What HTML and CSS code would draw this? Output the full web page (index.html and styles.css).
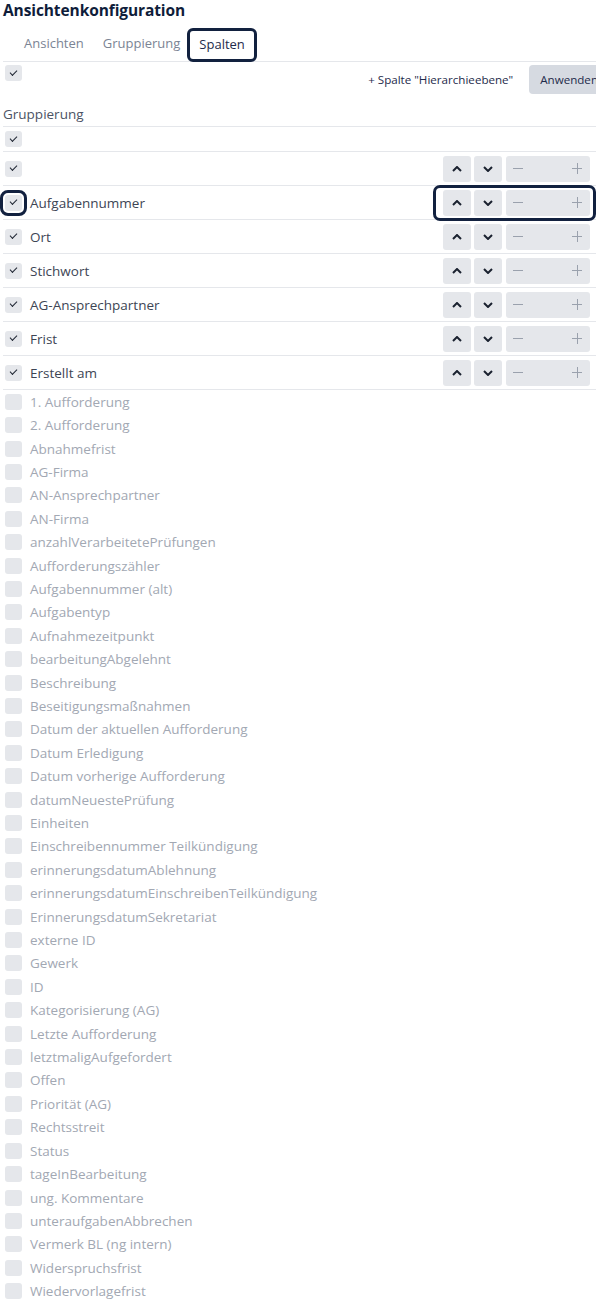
FILE: index.html
```html
<!DOCTYPE html>
<html lang="de">
<head>
    <meta charset="UTF-8">
    <meta name="viewport" content="width=device-width, initial-scale=1.0">
    <title>Ansichtenkonfiguration</title>
    <link rel="stylesheet" href="styles.css">
</head>
<body>
    <div class="panel">
        <h1 class="title">Ansichtenkonfiguration</h1>
        <nav class="tabs">
            <span class="tab">Ansichten</span>
            <span class="tab">Gruppierung</span>
            <span class="tab active">Spalten</span>
        </nav>

        <div class="toolbar">
            <span class="check on"></span>
            <div class="actions">
                <button class="link-btn">+ Spalte "Hierarchieebene"</button>
                <button class="apply-btn">Anwenden</button>
            </div>
        </div>

        <div class="section-label">Gruppierung</div>
        <div class="row row-group"><span class="check on"></span></div>

        <div class="row">
            <span class="check on"></span>
            <span class="label"></span>
            <div class="controls">
                <button class="mv"><svg width="10" height="6" viewBox="0 0 10 6"><path d="M1 5 5 1 9 5"/></svg></button>
                <button class="mv"><svg width="10" height="6" viewBox="0 0 10 6"><path d="M1 1 5 5 9 1"/></svg></button>
                <div class="stepper"><span class="minus"></span><span class="plus"></span></div>
            </div>
        </div>
        <div class="row">
            <span class="check on focus"></span>
            <span class="label">Aufgabennummer</span>
            <div class="controls focus">
                <button class="mv"><svg width="10" height="6" viewBox="0 0 10 6"><path d="M1 5 5 1 9 5"/></svg></button>
                <button class="mv"><svg width="10" height="6" viewBox="0 0 10 6"><path d="M1 1 5 5 9 1"/></svg></button>
                <div class="stepper"><span class="minus"></span><span class="plus"></span></div>
            </div>
        </div>
        <div class="row">
            <span class="check on"></span>
            <span class="label">Ort</span>
            <div class="controls">
                <button class="mv"><svg width="10" height="6" viewBox="0 0 10 6"><path d="M1 5 5 1 9 5"/></svg></button>
                <button class="mv"><svg width="10" height="6" viewBox="0 0 10 6"><path d="M1 1 5 5 9 1"/></svg></button>
                <div class="stepper"><span class="minus"></span><span class="plus"></span></div>
            </div>
        </div>
        <div class="row">
            <span class="check on"></span>
            <span class="label">Stichwort</span>
            <div class="controls">
                <button class="mv"><svg width="10" height="6" viewBox="0 0 10 6"><path d="M1 5 5 1 9 5"/></svg></button>
                <button class="mv"><svg width="10" height="6" viewBox="0 0 10 6"><path d="M1 1 5 5 9 1"/></svg></button>
                <div class="stepper"><span class="minus"></span><span class="plus"></span></div>
            </div>
        </div>
        <div class="row">
            <span class="check on"></span>
            <span class="label">AG-Ansprechpartner</span>
            <div class="controls">
                <button class="mv"><svg width="10" height="6" viewBox="0 0 10 6"><path d="M1 5 5 1 9 5"/></svg></button>
                <button class="mv"><svg width="10" height="6" viewBox="0 0 10 6"><path d="M1 1 5 5 9 1"/></svg></button>
                <div class="stepper"><span class="minus"></span><span class="plus"></span></div>
            </div>
        </div>
        <div class="row">
            <span class="check on"></span>
            <span class="label">Frist</span>
            <div class="controls">
                <button class="mv"><svg width="10" height="6" viewBox="0 0 10 6"><path d="M1 5 5 1 9 5"/></svg></button>
                <button class="mv"><svg width="10" height="6" viewBox="0 0 10 6"><path d="M1 1 5 5 9 1"/></svg></button>
                <div class="stepper"><span class="minus"></span><span class="plus"></span></div>
            </div>
        </div>
        <div class="row">
            <span class="check on"></span>
            <span class="label">Erstellt am</span>
            <div class="controls">
                <button class="mv"><svg width="10" height="6" viewBox="0 0 10 6"><path d="M1 5 5 1 9 5"/></svg></button>
                <button class="mv"><svg width="10" height="6" viewBox="0 0 10 6"><path d="M1 1 5 5 9 1"/></svg></button>
                <div class="stepper"><span class="minus"></span><span class="plus"></span></div>
            </div>
        </div>

        <ul class="unused">
            <li><span class="check"></span>1. Aufforderung</li>
            <li><span class="check"></span>2. Aufforderung</li>
            <li><span class="check"></span>Abnahmefrist</li>
            <li><span class="check"></span>AG-Firma</li>
            <li><span class="check"></span>AN-Ansprechpartner</li>
            <li><span class="check"></span>AN-Firma</li>
            <li><span class="check"></span>anzahlVerarbeitetePrüfungen</li>
            <li><span class="check"></span>Aufforderungszähler</li>
            <li><span class="check"></span>Aufgabennummer (alt)</li>
            <li><span class="check"></span>Aufgabentyp</li>
            <li><span class="check"></span>Aufnahmezeitpunkt</li>
            <li><span class="check"></span>bearbeitungAbgelehnt</li>
            <li><span class="check"></span>Beschreibung</li>
            <li><span class="check"></span>Beseitigungsmaßnahmen</li>
            <li><span class="check"></span>Datum der aktuellen Aufforderung</li>
            <li><span class="check"></span>Datum Erledigung</li>
            <li><span class="check"></span>Datum vorherige Aufforderung</li>
            <li><span class="check"></span>datumNeuestePrüfung</li>
            <li><span class="check"></span>Einheiten</li>
            <li><span class="check"></span>Einschreibennummer Teilkündigung</li>
            <li><span class="check"></span>erinnerungsdatumAblehnung</li>
            <li><span class="check"></span>erinnerungsdatumEinschreibenTeilkündigung</li>
            <li><span class="check"></span>ErinnerungsdatumSekretariat</li>
            <li><span class="check"></span>externe ID</li>
            <li><span class="check"></span>Gewerk</li>
            <li><span class="check"></span>ID</li>
            <li><span class="check"></span>Kategorisierung (AG)</li>
            <li><span class="check"></span>Letzte Aufforderung</li>
            <li><span class="check"></span>letztmaligAufgefordert</li>
            <li><span class="check"></span>Offen</li>
            <li><span class="check"></span>Priorität (AG)</li>
            <li><span class="check"></span>Rechtsstreit</li>
            <li><span class="check"></span>Status</li>
            <li><span class="check"></span>tageInBearbeitung</li>
            <li><span class="check"></span>ung. Kommentare</li>
            <li><span class="check"></span>unteraufgabenAbbrechen</li>
            <li><span class="check"></span>Vermerk BL (ng intern)</li>
            <li><span class="check"></span>Widerspruchsfrist</li>
            <li><span class="check"></span>Wiedervorlagefrist</li>
        </ul>
    </div>
</body>
</html>
```

FILE: styles.css
```css
html, body {
    margin: 0;
    overflow-x: hidden;
    background: #fff;
}
body {
    font-family: "Open Sans", "Noto Sans", sans-serif;
    font-size: 13.5px;
    color: #3d4554;
}
.panel {
    padding: 0 0 0 3px;
}
.title {
    margin: 0;
    font-size: 15.5px;
    letter-spacing: -0.1px;
    font-weight: 700;
    line-height: 20px;
    color: #0f1d3a;
}

/* tabs */
.tabs {
    display: flex;
    gap: 3px;
    margin-top: 8px;
    padding-left: 13px;
    border-bottom: 1px solid #e5e7eb;
    height: 33px;
}
.tab {
    height: 34px;
    line-height: 30px;
    padding: 0 8px;
    color: #7b8494;
    font-size: 13px;
    box-sizing: border-box;
}
.tab.active {
    margin-left: -4px;
    border: 3px solid #12213f;
    border-radius: 6px;
    padding: 0 9px;
    line-height: 27px;
    color: #1e2b4b;
    background: #fff;
}

/* toolbar */
.toolbar {
    display: flex;
    justify-content: space-between;
    align-items: flex-start;
    padding: 3px 0 0 2px;
    margin-right: -13px;
    height: 42px;
    box-sizing: border-box;
}
.actions {
    display: flex;
    align-items: center;
    gap: 4px;
}
.link-btn,
.apply-btn {
    font-family: inherit;
    font-size: 11.6px;
    border: 0;
    height: 29px;
    padding: 0 12px;
    color: #1e2b4b;
    background: transparent;
    border-radius: 4px;
}
.apply-btn {
    background: #d6dae1;
    padding: 0 11px;
}

.section-label {
    color: #4b5364;
    font-size: 13.5px;
    line-height: 20px;
    padding-bottom: 2px;
    border-bottom: 1px solid #e5e7eb;
}

/* checkbox */
.check {
    position: relative;
    flex: none;
    display: inline-block;
    width: 17px;
    height: 16px;
    border-radius: 3px;
    background: #e5e7eb;
    box-sizing: border-box;
}
.check.on::after {
    content: "";
    position: absolute;
    left: 5px;
    top: 4.5px;
    width: 6px;
    height: 3px;
    border-left: 1.7px solid #1f2633;
    border-bottom: 1.7px solid #1f2633;
    transform: rotate(-45deg);
}
.check.focus {
    outline: 3px solid #12213f;
    outline-offset: 2px;
    border-radius: 3px;
}

/* rows */
.row {
    display: flex;
    align-items: center;
    height: 34px;
    padding-left: 2px;
    border-bottom: 1px solid #e5e7eb;
    box-sizing: border-box;
}
.row-group {
    height: 25px;
    align-items: flex-start;
    padding-top: 4px;
}
.label {
    margin-left: 8px;
    flex: 1;
    color: #3d4554;
}
.controls {
    display: flex;
    gap: 3px;
    border: 3px solid transparent;
    border-radius: 7px;
    padding: 2px 3px 2px 7px;
}
.controls.focus {
    border-color: #12213f;
}
.mv {
    width: 28px;
    height: 26px;
    border: 0;
    border-radius: 3px;
    background: #e5e7eb;
    display: flex;
    align-items: center;
    justify-content: center;
    padding: 0;
}
.mv path {
    fill: none;
    stroke: #1b2230;
    stroke-width: 2;
}
.stepper {
    position: relative;
    width: 84px;
    height: 26px;
    margin-left: 1px;
    border-radius: 3px;
    background: #e5e7eb;
}
.minus,
.plus {
    position: absolute;
    top: 12px;
    width: 10px;
    height: 1px;
    background: #9aa1ad;
}
.minus {
    left: 7px;
}
.plus {
    right: 8px;
}
.plus::after {
    content: "";
    position: absolute;
    left: 4.5px;
    top: -5px;
    width: 1px;
    height: 11px;
    background: #9aa1ad;
}

/* unused columns */
.unused {
    list-style: none;
    margin: 0;
    padding: 0 0 0 2px;
}
.unused li {
    display: flex;
    align-items: center;
    height: 23.42px;
    color: #a2a8b3;
}
.unused .check {
    margin-right: 8px;
}
```
